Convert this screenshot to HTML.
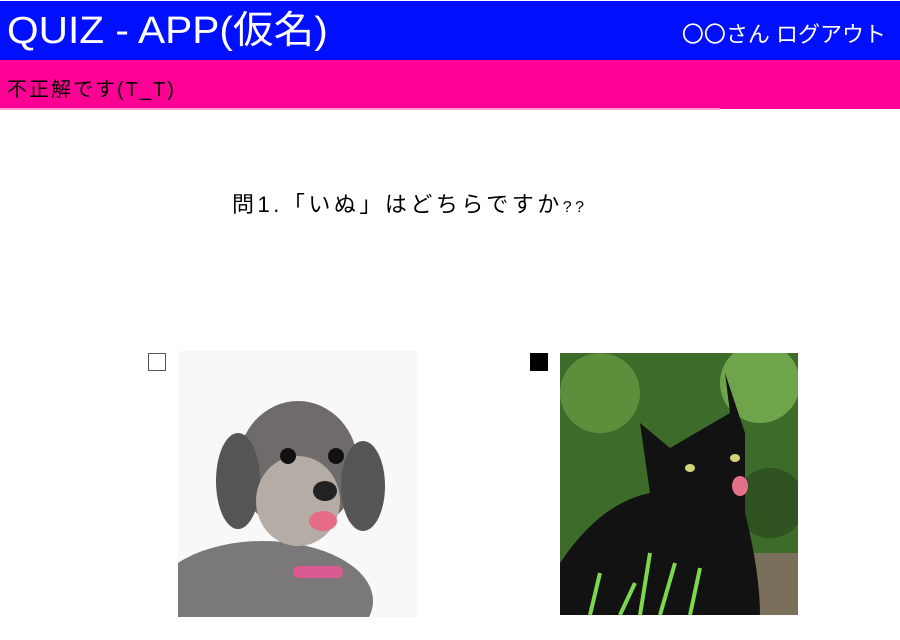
<!DOCTYPE html>
<html><head><meta charset="utf-8"><style>
body{margin:0;width:900px;height:640px;background:#fff;font-family:"Liberation Sans","Noto Sans CJK JP",sans-serif;position:relative;overflow:hidden}
.hd{position:absolute;left:0;top:1px;width:900px;height:59px;background:#0010ff;color:#fff}
.hd .t{position:absolute;left:7px;top:5px;font-size:38px;line-height:50px;transform:scaleX(1.07);transform-origin:left}
.hd .r{position:absolute;right:14px;top:19px;font-size:22px;line-height:30px}
.pk{position:absolute;left:0;top:60px;width:900px;height:49px;background:#ff0094;font-size:20px;line-height:60px;padding-left:7px;box-sizing:border-box;letter-spacing:2px}
.q{position:absolute;left:232px;top:189px;font-size:22px;line-height:32px;letter-spacing:3.5px}
.cb{position:absolute;width:18px;height:18px;border:1.5px solid #555;box-sizing:border-box}
</style></head><body>
<div class="hd"><div class="t">QUIZ - APP(仮名)</div><div class="r">〇〇さん ログアウト</div></div>
<div class="pk">不正解です(T_T)</div>
<div style="position:absolute;left:0;top:108px;width:720px;height:2px;background:#ff9bd0"></div>
<div class="q">問1.「いぬ」はどちらですか<span style="font-size:16px">??</span></div>
<div class="cb" style="left:148px;top:353px"></div>
<div style="position:absolute;left:530px;top:353px;width:18px;height:18px;background:#000"></div>
<svg style="position:absolute;left:178px;top:351px" width="239" height="266">
<rect width="239" height="266" fill="#f8f8f8"/>
<ellipse cx="85" cy="250" rx="110" ry="60" fill="#7a7878"/>
<ellipse cx="120" cy="115" rx="60" ry="65" fill="#6e6b6a"/>
<ellipse cx="60" cy="130" rx="22" ry="48" fill="#555"/>
<ellipse cx="185" cy="135" rx="22" ry="45" fill="#555"/>
<ellipse cx="120" cy="150" rx="42" ry="45" fill="#b5aca5"/>
<circle cx="110" cy="105" r="8" fill="#111"/><circle cx="158" cy="105" r="8" fill="#111"/>
<ellipse cx="147" cy="140" rx="12" ry="10" fill="#222"/>
<ellipse cx="145" cy="170" rx="14" ry="10" fill="#e66b85"/>
<rect x="115" y="215" width="50" height="12" rx="5" fill="#d95a90"/>
</svg>
<svg style="position:absolute;left:560px;top:353px" width="238" height="262">
<rect width="238" height="262" fill="#3d6b2a"/>
<circle cx="40" cy="40" r="40" fill="#5c8f3c"/><circle cx="200" cy="30" r="40" fill="#6fa54a"/><circle cx="210" cy="150" r="35" fill="#2e5220"/>
<rect x="150" y="200" width="88" height="62" fill="#7a6f5a"/>
<path d="M0 262 L0 210 Q40 150 90 140 L80 70 L110 95 L170 60 L165 20 L185 80 L185 160 Q200 220 200 262Z" fill="#121212"/>
<ellipse cx="130" cy="115" rx="5" ry="4" fill="#d4d27a"/><ellipse cx="175" cy="105" rx="5" ry="4" fill="#d4d27a"/>
<ellipse cx="180" cy="133" rx="8" ry="10" fill="#e4708a"/>
<path d="M30 262 L40 220 M80 262 L90 200 M100 262 L115 210 M60 262 L75 230 M130 262 L140 215" stroke="#7ed84e" stroke-width="4"/>
</svg>
</body></html>
